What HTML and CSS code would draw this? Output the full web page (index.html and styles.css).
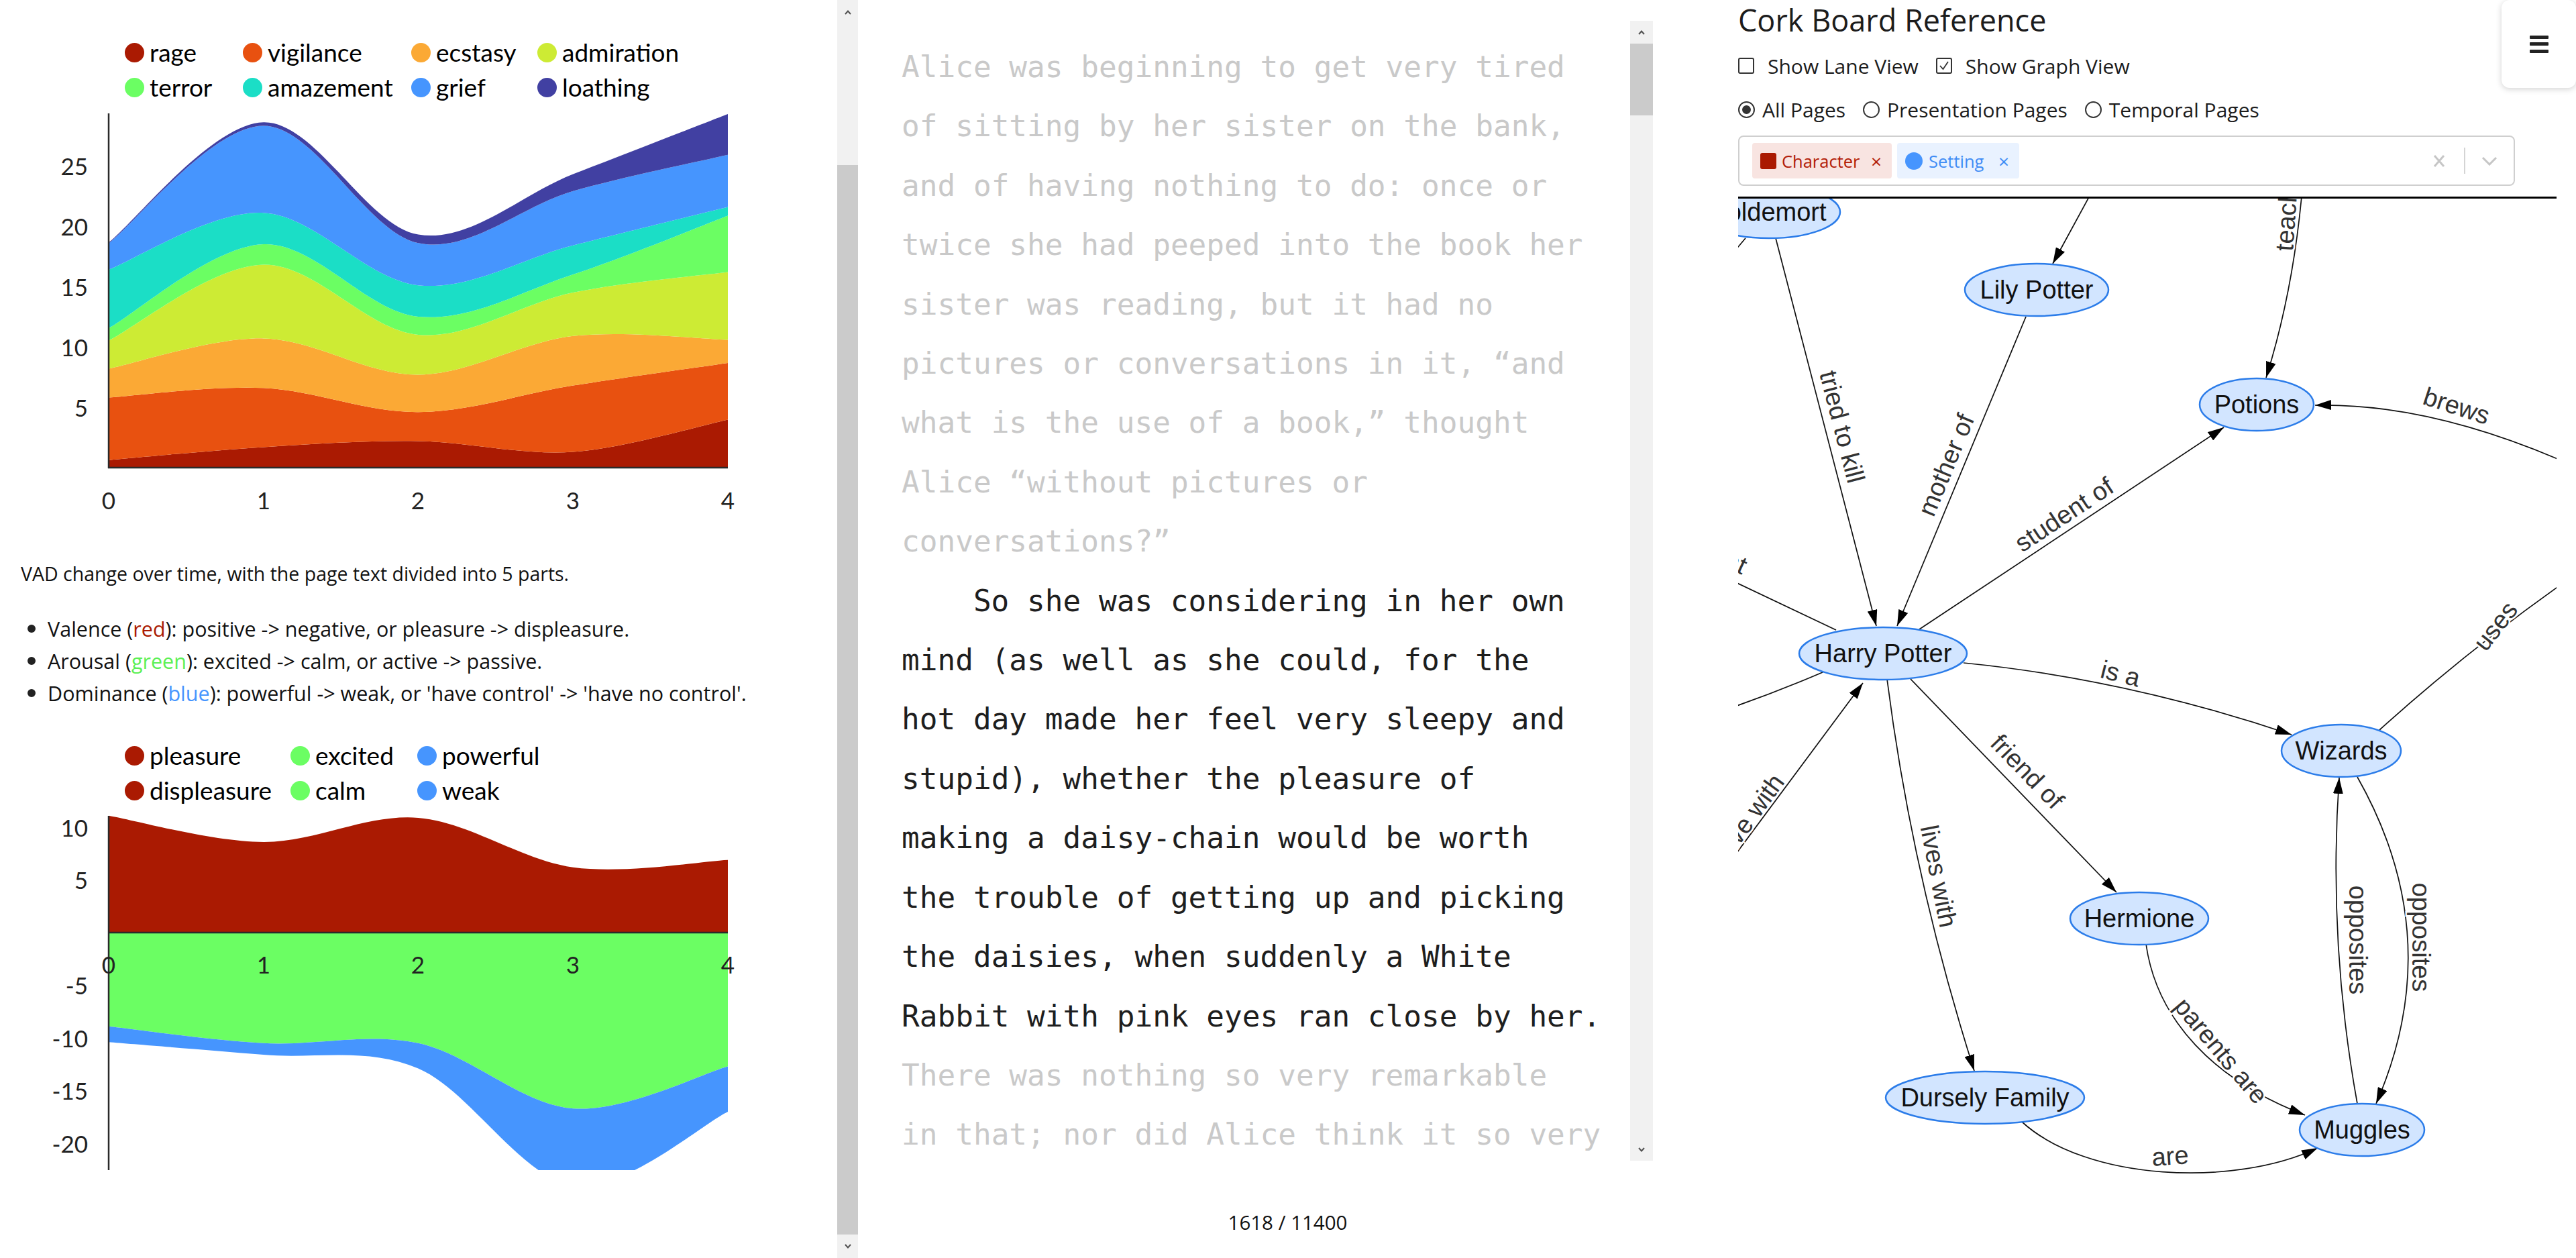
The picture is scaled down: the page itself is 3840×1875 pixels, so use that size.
FILE: index.html
```html
<!DOCTYPE html>
<html lang="en">
<head>
<meta charset="utf-8">
<title>Cork Board Reference</title>
<link rel="stylesheet" href="styles.css">
</head>
<body>
<div class="app">
  <section class="analysis">
    <div class="analysis-body">
      <div class="legend legend-emotions">
        <span class="key"><i class="dot c-rage"></i>rage</span>
        <span class="key"><i class="dot c-vig"></i>vigilance</span>
        <span class="key"><i class="dot c-ecs"></i>ecstasy</span>
        <span class="key"><i class="dot c-adm"></i>admiration</span>
        <span class="key"><i class="dot c-ter"></i>terror</span>
        <span class="key"><i class="dot c-ama"></i>amazement</span>
        <span class="key"><i class="dot c-gri"></i>grief</span>
        <span class="key"><i class="dot c-loa"></i>loathing</span>
      </div>
      <svg class="chart" width="1248" height="614" viewBox="0 156 1248 614">
        <defs><clipPath id="clip-emo"><rect x="162" y="160" width="923" height="537"/></clipPath></defs>
        <g class="stack" data-y0="697" data-k="18" clip-path="url(#clip-emo)">
          <path class="f-rage" data-lower="0 0 0 0 0" data-upper="0.63 1.7 2.2 1.3 3.98"/>
          <path class="f-vig" data-lower="0.63 1.7 2.2 1.3 3.98" data-upper="5.81 6.6 4.6 6.8 8.67"/>
          <path class="f-ecs" data-lower="5.81 6.6 4.6 6.8 8.67" data-upper="8.19 10.7 7.7 10.9 10.58"/>
          <path class="f-adm" data-lower="8.19 10.7 7.7 10.9 10.58" data-upper="10.53 16.8 11.0 14.5 16.19"/>
          <path class="f-ter" data-lower="10.53 16.8 11.0 14.5 16.19" data-upper="11.55 18.5 12.5 16.0 20.86"/>
          <path class="f-ama" data-lower="11.55 18.5 12.5 16.0 20.86" data-upper="16.4 21.1 15.1 18.4 21.58"/>
          <path class="f-gri" data-lower="16.4 21.1 15.1 18.4 21.58" data-upper="18.57 28.3 18.6 22.9 25.9"/>
          <path class="f-loa" data-lower="18.57 28.3 18.6 22.9 25.9" data-upper="18.65 28.6 19.3 24.3 29.28"/>
        </g>
        <line class="axis" x1="162" y1="169" x2="162" y2="698"/>
        <line class="axis" x1="161" y1="697" x2="1085" y2="697"/>
        <g class="tick tick-y">
          <text x="131" y="247">25</text>
          <text x="131" y="337">20</text>
          <text x="131" y="427">15</text>
          <text x="131" y="517">10</text>
          <text x="131" y="607">5</text>
        </g>
        <g class="tick tick-x">
          <text x="162" y="745">0</text>
          <text x="393" y="745">1</text>
          <text x="623" y="745">2</text>
          <text x="854" y="745">3</text>
          <text x="1085" y="745">4</text>
        </g>
      </svg>
      <p class="desc">VAD change over time, with the page text divided into 5 parts.</p>
      <ul class="vad-list">
        <li>Valence (<span class="t-red">red</span>): positive -&gt; negative, or pleasure -&gt; displeasure.</li>
        <li>Arousal (<span class="t-green">green</span>): excited -&gt; calm, or active -&gt; passive.</li>
        <li>Dominance (<span class="t-blue">blue</span>): powerful -&gt; weak, or 'have control' -&gt; 'have no control'.</li>
      </ul>
      <div class="legend legend-vad">
        <span class="key"><i class="dot c-rage"></i>pleasure</span>
        <span class="key"><i class="dot c-ter"></i>excited</span>
        <span class="key"><i class="dot c-gri"></i>powerful</span>
        <span class="key"><i class="dot c-rage"></i>displeasure</span>
        <span class="key"><i class="dot c-ter"></i>calm</span>
        <span class="key"><i class="dot c-gri"></i>weak</span>
      </div>
      <svg class="chart" width="1248" height="576" viewBox="0 1204 1248 576">
        <defs><clipPath id="clip-vad"><rect x="162" y="1210" width="923" height="534"/></clipPath></defs>
        <g class="stack" data-y0="1390" data-k="15.7" clip-path="url(#clip-vad)">
          <path class="f-rage" data-lower="0 0 0 0 0" data-upper="11.1 8.6 10.9 6.2 6.9"/>
          <path class="f-ter" data-lower="-8.9 -10.5 -10.5 -16.7 -12.7" data-upper="0 0 0 0 0"/>
          <path class="f-gri" data-lower="-10.4 -11.6 -12.9 -24 -17.0" data-upper="-8.9 -10.5 -10.5 -16.7 -12.7"/>
        </g>
        <line class="axis" x1="162" y1="1216" x2="162" y2="1744"/>
        <line class="axis" x1="161" y1="1390" x2="1085" y2="1390"/>
        <g class="tick tick-y">
          <text x="131" y="1233">10</text>
          <text x="131" y="1311">5</text>
          <text x="131" y="1468">-5</text>
          <text x="131" y="1547">-10</text>
          <text x="131" y="1625">-15</text>
          <text x="131" y="1704">-20</text>
        </g>
        <g class="tick tick-x">
          <text x="162" y="1437">0</text>
          <text x="393" y="1437">1</text>
          <text x="623" y="1437">2</text>
          <text x="854" y="1437">3</text>
          <text x="1085" y="1437">4</text>
        </g>
      </svg>
    </div>
    <div class="scrollbar scrollbar-page">
      <div class="sb-btn sb-btn-up"><svg width="10" height="7" viewBox="0 0 10 7"><polyline points="1,6 5,1.5 9,6"/></svg></div>
      <div class="sb-track-top"></div>
      <div class="sb-thumb"></div>
      <div class="sb-fill"></div>
      <div class="sb-btn sb-btn-down"><svg width="10" height="7" viewBox="0 0 10 7"><polyline points="1,1 5,5.5 9,1"/></svg></div>
    </div>
  </section>

  <section class="reader">
    <div class="reader-box">
      <div class="reader-text">
        <p class="faded">Alice was beginning to get very tired<br>of sitting by her sister on the bank,<br>and of having nothing to do: once or<br>twice she had peeped into the book her<br>sister was reading, but it had no<br>pictures or conversations in it, “and<br>what is the use of a book,” thought<br>Alice “without pictures or<br>conversations?”</p>
        <p class="indent"><span class="current">So she was considering in her own<br>mind (as well as she could, for the<br>hot day made her feel very sleepy and<br>stupid), whether the pleasure of<br>making a daisy-chain would be worth<br>the trouble of getting up and picking<br>the daisies, when suddenly a White<br>Rabbit with pink eyes ran close by her.</span><br><span class="faded">There was nothing so very remarkable<br>in that; nor did Alice think it so very</span></p>
      </div>
      <div class="scrollbar scrollbar-reader">
        <div class="sb-btn sb-btn-up"><svg width="10" height="7" viewBox="0 0 10 7"><polyline points="1,6 5,1.5 9,6"/></svg></div>
        <div class="sb-thumb"></div>
        <div class="sb-fill"></div>
        <div class="sb-btn sb-btn-down"><svg width="10" height="7" viewBox="0 0 10 7"><polyline points="1,1 5,5.5 9,1"/></svg></div>
      </div>
    </div>
    <div class="page-count">1618 / 11400</div>
  </section>

  <section class="cork">
    <h1 class="cork-title">Cork Board Reference</h1>
    <div class="options options-view">
      <label class="opt"><span class="checkbox"></span>Show Lane View</label>
      <label class="opt"><span class="checkbox"><svg width="20" height="20" viewBox="0 0 20 20"><polyline points="4,10 8.5,15 16,4"/></svg></span>Show Graph View</label>
    </div>
    <div class="options options-pages">
      <label class="opt"><span class="radio radio-on"></span>All Pages</label>
      <label class="opt"><span class="radio"></span>Presentation Pages</label>
      <label class="opt"><span class="radio"></span>Temporal Pages</label>
    </div>
    <div class="tag-select">
      <span class="chip chip-character"><i class="chip-icon"></i>Character<b class="chip-x">×</b></span>
      <span class="chip chip-setting"><i class="chip-icon"></i>Setting<b class="chip-x">×</b></span>
      <span class="select-indicators">
        <svg class="ind-clear" width="20" height="20" viewBox="0 0 20 20"><path d="M3,2 L17,18 M17,2 L3,18"/></svg>
        <span class="ind-sep"></span>
        <svg class="ind-chevron" width="24" height="14" viewBox="0 0 24 14"><polyline points="2,2 12,12 22,2"/></svg>
      </span>
    </div>
    <div class="graph">
      <svg class="graph-svg" width="1220" height="1579" viewBox="2591 296 1220 1579">
        <defs>
          <marker id="arrow" markerUnits="userSpaceOnUse" markerWidth="24" markerHeight="15" refX="24" refY="7.5" orient="auto">
            <path d="M0,0 L24,7.5 L0,15 Z" fill="#000"/>
          </marker>
        </defs>
        <g class="edges">
          <path d="M2647,355 L2797,933" marker-end="url(#arrow)"/>
          <path d="M3020,472 L2828,933" marker-end="url(#arrow)"/>
          <path d="M3128,268 L3060,393" marker-end="url(#arrow)"/>
          <path d="M3433,270 Q3420,430 3378,563" marker-end="url(#arrow)"/>
          <path d="M2861,938 L3315,637" marker-end="url(#arrow)"/>
          <path d="M3870,710 Q3640,600 3451,604" marker-end="url(#arrow)"/>
          <path d="M3547,1088 Q3700,950 3870,835"/>
          <path d="M2927,988 Q3170,1012 3416,1095" marker-end="url(#arrow)"/>
          <path d="M2848,1012 L3155,1330" marker-end="url(#arrow)"/>
          <path d="M2813,1012 Q2850,1304 2943,1596" marker-end="url(#arrow)"/>
          <path d="M2560,1310 L2777,1018" marker-end="url(#arrow)"/>
          <path d="M2737,939 L2560,855"/>
          <path d="M2717,1002 Q2640,1035 2560,1062"/>
          <path d="M2602,355 L2580,381"/>
          <path d="M3199,1407 C3215,1520 3300,1610 3436,1662" marker-end="url(#arrow)"/>
          <path d="M3514,1645 Q3470,1402 3487,1159" marker-end="url(#arrow)"/>
          <path d="M3514,1158 Q3650,1398 3542,1645" marker-end="url(#arrow)"/>
          <path d="M3014,1672 C3110,1760 3330,1770 3455,1711" marker-end="url(#arrow)"/>
        </g>
        <g class="edge-labels">
          <text transform="translate(2746,636) rotate(75.5)">tried to kill</text>
          <text transform="translate(2901,693) rotate(-67.4)">mother of</text>
          <text transform="translate(3077,767) rotate(-33.5)">student of</text>
          <text transform="translate(3662,605) rotate(18)">brews</text>
          <text class="lbl-start" transform="translate(3405,374) rotate(-86)">teaches</text>
          <text transform="translate(3720,933) rotate(-52)">uses</text>
          <text transform="translate(3161,1004) rotate(14)">is a</text>
          <text transform="translate(3022,1150) rotate(46)">friend of</text>
          <text transform="translate(2890,1306) rotate(79)">lives with</text>
          <text class="lbl-end" transform="translate(2651,1158) rotate(-54)">live with</text>
          <text class="lbl-end" transform="translate(2602,845) rotate(25)">student</text>
          <text transform="translate(3235,1723) rotate(-4)">are</text>
          <text transform="translate(3311,1566) rotate(50)">parents are</text>
          <text transform="translate(3515,1401) rotate(90)">opposites</text>
          <text transform="translate(3609,1397) rotate(90)">opposites</text>
        </g>
        <g class="nodes">
          <ellipse cx="2637" cy="316" rx="106" ry="39"/><text x="2637" y="316">Voldemort</text>
          <ellipse cx="3036" cy="432" rx="107" ry="39"/><text x="3036" y="432">Lily Potter</text>
          <ellipse cx="3364" cy="603" rx="85" ry="39"/><text x="3364" y="603">Potions</text>
          <ellipse cx="2807" cy="974" rx="125" ry="39"/><text x="2807" y="974">Harry Potter</text>
          <ellipse cx="3490" cy="1119" rx="89" ry="39"/><text x="3490" y="1119">Wizards</text>
          <ellipse cx="3189" cy="1369" rx="103" ry="39"/><text x="3189" y="1369">Hermione</text>
          <ellipse cx="2959" cy="1636" rx="148" ry="39"/><text x="2959" y="1636">Dursely Family</text>
          <ellipse cx="3521" cy="1684" rx="93" ry="39"/><text x="3521" y="1684">Muggles</text>
        </g>
      </svg>
    </div>
  </section>

  <div class="menu-btn" role="button" aria-label="Menu"><span></span><span></span><span></span></div>
</div>
<script src="script.js"></script>
</body>
</html>
```

FILE: styles.css
```css
* { box-sizing: border-box; }
html, body { margin: 0; padding: 0; }
body {
  width: 3840px;
  height: 1875px;
  overflow: hidden;
  background: #fff;
  color: #222;
  font-family: "Open Sans", "Noto Sans", sans-serif;
}
.app { display: flex; height: 1875px; position: relative; }

/* ---------- left: analysis ---------- */
.analysis { width: 1279px; flex: none; display: flex; height: 100%; }
.analysis-body { width: 1248px; flex: none; overflow: hidden; }

.legend {
  display: grid;
  margin-left: 186px;
  font-family: Lato, "Open Sans", sans-serif;
  font-size: 37px;
  line-height: 52px;
  color: #000;
}
.legend-emotions { grid-template-columns: 176px 251px 188px auto; margin-top: 52px; }
.legend-vad { grid-template-columns: 247px 189px auto; margin-top: 43px; }
.key { display: flex; align-items: center; gap: 8px; white-space: nowrap; }
.dot { width: 29px; height: 29px; border-radius: 50%; flex: none; display: block; }

.c-rage { background: #aa1a02; }
.c-vig { background: #e85110; }
.c-ecs { background: #fba935; }
.c-adm { background: #cdeb34; }
.c-ter { background: #6bfe63; }
.c-ama { background: #1bdec6; }
.c-gri { background: #4695fe; }
.c-loa { background: #4140a2; }

.chart { display: block; }
.f-rage { fill: #aa1a02; }
.f-vig { fill: #e85110; }
.f-ecs { fill: #fba935; }
.f-adm { fill: #cdeb34; }
.f-ter { fill: #6bfe63; }
.f-ama { fill: #1bdec6; }
.f-gri { fill: #4695fe; }
.f-loa { fill: #4140a2; }
.axis { stroke: #2a2a2a; stroke-width: 2.5; }
.tick text {
  font-family: Lato, "Open Sans", sans-serif;
  font-size: 35px;
  fill: #222;
  dominant-baseline: central;
}
.tick-y text { text-anchor: end; }
.tick-x text { text-anchor: middle; }

.desc { margin: 65px 0 0 31px; font-size: 28.5px; line-height: 40px; color: #111; }
.vad-list {
  list-style: none;
  margin: 38px 0 0 0;
  padding: 0 0 0 71px;
  font-size: 30.5px;
  line-height: 48px;
  color: #111;
}
.vad-list li { position: relative; white-space: nowrap; }
.vad-list li::before {
  content: "";
  position: absolute;
  left: -30px;
  top: 18px;
  width: 12px;
  height: 12px;
  border-radius: 50%;
  background: #222;
}
.t-red { color: #aa1a02; }
.t-green { color: #5cf055; }
.t-blue { color: #4695fe; }

/* ---------- scrollbars ---------- */
.scrollbar { flex: none; display: flex; flex-direction: column; background: #f1f1f1; }
.sb-btn { flex: none; display: flex; align-items: center; justify-content: center; }
.sb-btn polyline { fill: none; stroke: #505050; stroke-width: 2; }
.sb-thumb { flex: none; background: #cbcbcb; }
.sb-fill { flex: 1; }
.scrollbar-page { width: 31px; height: 1875px; }
.scrollbar-page .sb-btn-up { height: 36px; }
.scrollbar-page .sb-track-top { height: 210px; flex: none; }
.scrollbar-page .sb-thumb { height: 1594px; }
.scrollbar-page .sb-btn-down { height: 35px; }
.scrollbar-reader { width: 34px; height: 100%; }
.scrollbar-reader .sb-btn-up { height: 34px; }
.scrollbar-reader .sb-thumb { height: 107px; }
.scrollbar-reader .sb-btn-down { height: 33px; }

/* ---------- middle: reader ---------- */
.reader { width: 1281px; flex: none; display: flex; flex-direction: column; padding-top: 31px; }
.reader-box { width: 1164px; height: 1699px; margin-left: 21px; display: flex; }
.reader-text {
  flex: 1;
  overflow: hidden;
  padding: 25px 0 0 44px;
  font-family: "DejaVu Sans Mono", "Liberation Mono", monospace;
  font-size: 44.4px;
  line-height: 88.4px;
  white-space: nowrap;
}
.reader-text p { margin: 0; }
.faded { color: #c9c9c9; }
.current { color: #1e1e1e; }
.indent { text-indent: 4ch; }
.page-count {
  margin-top: 72px;
  text-align: center;
  font-size: 29.5px;
  line-height: 40px;
  color: #111;
}

/* ---------- right: cork board ---------- */
.cork { width: 1280px; flex: none; padding-left: 31px; display: flex; flex-direction: column; }
.cork-title { margin: 0; font-size: 45px; font-weight: 400; line-height: 60px; color: #1c1c1c; }
.options { display: flex; align-items: center; height: 44px; font-size: 30px; color: #1c1c1c; }
.options-view { margin-top: 16px; }
.options-pages { margin-top: 21px; }
.opt { display: flex; align-items: center; margin-right: 26px; white-space: nowrap; }
.options-view .opt { gap: 20px; }
.options-pages .opt { gap: 11px; }
.checkbox {
  width: 24px; height: 24px;
  border: 2px solid #333;
  border-radius: 3px;
  display: flex; align-items: center; justify-content: center;
}
.checkbox polyline { fill: none; stroke: #333; stroke-width: 1.8; }
.radio {
  width: 25px; height: 25px;
  border: 2px solid #333;
  border-radius: 50%;
  display: flex; align-items: center; justify-content: center;
}
.radio-on::after { content: ""; width: 13px; height: 13px; border-radius: 50%; background: #333; }

.tag-select {
  margin-top: 17px;
  width: 1158px;
  height: 75px;
  border: 2px solid #cfcfcf;
  border-radius: 8px;
  display: flex;
  align-items: center;
  padding-left: 19px;
}
.chip {
  display: flex;
  align-items: center;
  height: 53px;
  border-radius: 4px;
  padding: 0 15px 0 12px;
  margin-right: 8px;
  font-size: 25.5px;
  white-space: nowrap;
}
.chip-character { width: 208px; background: #f8e4e1; color: #b21c08; }
.chip-setting { width: 182px; background: #e9f2ff; color: #3f8cf5; }
.chip-icon { display: block; flex: none; width: 24px; height: 24px; border-radius: 3px; background: #aa1a02; margin-right: 8px; }
.chip-setting .chip-icon { width: 26px; height: 26px; border-radius: 50%; background: #4695fe; margin-right: 9px; }
.chip-x { margin-left: auto; font-weight: 400; font-size: 28px; }
.select-indicators { margin-left: auto; display: flex; align-items: center; padding-right: 24px; }
.ind-clear path { fill: none; stroke: #c6c6c6; stroke-width: 3; }
.ind-sep { width: 2px; height: 39px; background: #d4d4d4; margin: 0 24px 0 27px; }
.ind-chevron polyline { fill: none; stroke: #c6c6c6; stroke-width: 3; }

.graph { margin-top: 16px; width: 1220px; border-top: 3px solid #000; flex: 1; overflow: hidden; }
.graph-svg { display: block; }
.edges path { fill: none; stroke: #111; stroke-width: 1.7; }
.edge-labels text {
  font-family: "Liberation Sans", Arial, sans-serif;
  font-size: 38px;
  fill: #333;
  text-anchor: middle;
  dominant-baseline: central;
  stroke: #fff;
  stroke-width: 5px;
  paint-order: stroke;
}
.edge-labels .lbl-start { text-anchor: start; }
.edge-labels .lbl-end { text-anchor: end; }
.nodes ellipse { fill: #d2e5ff; stroke: #2b7ce9; stroke-width: 2.5; }
.nodes text {
  font-family: "Liberation Sans", Arial, sans-serif;
  font-size: 38px;
  fill: #111;
  text-anchor: middle;
  dominant-baseline: central;
}

.menu-btn {
  position: absolute;
  top: 0;
  right: 0;
  width: 111px;
  height: 131px;
  background: #fff;
  border-radius: 12px;
  box-shadow: 0 2px 10px rgba(0, 0, 0, 0.18);
  display: flex;
  flex-direction: column;
  align-items: center;
  justify-content: center;
  gap: 5.5px;
}
.menu-btn span { display: block; width: 28px; height: 5px; background: #222; border-radius: 1px; }
```

FILE: script.js
```js
(function () {
  var X0 = 162, DX = 230.75;

  function fmt(p) { return p[0].toFixed(1) + ',' + p[1].toFixed(1); }

  function points(str, y0, k) {
    return str.trim().split(/\s+/).map(function (v, i) {
      return [X0 + i * DX, y0 - parseFloat(v) * k];
    });
  }

  function catmull(p, move) {
    var d = (move ? 'M' : 'L') + fmt(p[0]);
    for (var i = 0; i < p.length - 1; i++) {
      var p0 = p[Math.max(i - 1, 0)], p1 = p[i], p2 = p[i + 1], p3 = p[Math.min(i + 2, p.length - 1)];
      var c1 = [p1[0] + (p2[0] - p0[0]) / 6, p1[1] + (p2[1] - p0[1]) / 6];
      var c2 = [p2[0] - (p3[0] - p1[0]) / 6, p2[1] - (p3[1] - p1[1]) / 6];
      d += ' C' + fmt(c1) + ' ' + fmt(c2) + ' ' + fmt(p2);
    }
    return d;
  }

  document.querySelectorAll('.stack').forEach(function (g) {
    var y0 = parseFloat(g.getAttribute('data-y0'));
    var k = parseFloat(g.getAttribute('data-k'));
    g.querySelectorAll('path').forEach(function (path) {
      var up = points(path.getAttribute('data-upper'), y0, k);
      var lo = points(path.getAttribute('data-lower'), y0, k).reverse();
      path.setAttribute('d', catmull(up, true) + ' ' + catmull(lo, false) + ' Z');
    });
  });
})();
```
